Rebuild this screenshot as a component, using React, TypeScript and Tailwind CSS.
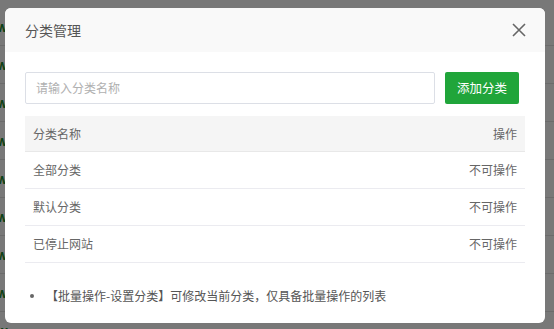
import React from "react";

const font = { fontFamily: '"Noto Sans CJK SC", "Noto Sans", sans-serif' };

const rows = [
  { name: "全部分类", op: "不可操作" },
  { name: "默认分类", op: "不可操作" },
  { name: "已停止网站", op: "不可操作" },
];

export default function App() {
  return (
    <div className="relative w-[554px] h-[329px] overflow-hidden bg-white" style={font}>
      {/* background page */}
      <div className="flex flex-col pt-[8px]">
        {Array.from({ length: 9 }).map((_, i) => (
          <div key={i} className="h-[38px] border-b border-[#e4e4e4] flex items-center">
            <span className="text-[14px] font-bold text-[#1a8a30] -ml-[4px]">w</span>
          </div>
        ))}
      </div>
      <div className="absolute inset-0 bg-black/[0.53]" />

      {/* modal */}
      <div className="absolute left-[5px] top-[8px] w-[540px] h-[315px] bg-white rounded-[6px] overflow-hidden flex flex-col">
        <div className="h-[44px] shrink-0 bg-[#f9f9f9] flex items-center justify-between pl-[20px] pr-[20px]">
          <span className="text-[14px] text-[#555]">分类管理</span>
          <svg width="14" height="14" viewBox="0 0 14 14" className="mr-[-1px]">
            <path d="M1 1 L13 13 M13 1 L1 13" stroke="#666" strokeWidth="1.6" />
          </svg>
        </div>
        <div className="flex flex-col px-[20px] pt-[20px]">
          <div className="flex items-center gap-[10px]">
            <div className="w-[410px] h-[32px] border border-[#dcdfe6] rounded-[2px] flex items-center px-[10px]">
              <span className="text-[12px] text-[#b0b0b0]">请输入分类名称</span>
            </div>
            <div className="w-[74px] h-[32px] bg-[#20a53a] rounded-[2px] flex items-center justify-center">
              <span className="text-[12.5px] text-white">添加分类</span>
            </div>
          </div>
          <div className="mt-[12px] w-[500px] flex flex-col text-[12px] text-[#666]">
            <div className="h-[36px] bg-[#f5f5f5] border-b border-[#e8e8e8] flex items-center justify-between px-[8px]">
              <span>分类名称</span>
              <span>操作</span>
            </div>
            {rows.map((r) => (
              <div key={r.name} className="h-[37px] border-b border-[#ebebf0] flex items-center justify-between px-[8px]">
                <span>{r.name}</span>
                <span>{r.op}</span>
              </div>
            ))}
          </div>
          <ul className="mt-[24px] pl-[5px] text-[12px] text-[#555]">
            <li className="flex items-center">
              <span className="w-[4px] h-[4px] rounded-full bg-[#666] mr-[12px]" />
              <span>【批量操作-设置分类】可修改当前分类，仅具备批量操作的列表</span>
            </li>
          </ul>
        </div>
      </div>
    </div>
  );
}
